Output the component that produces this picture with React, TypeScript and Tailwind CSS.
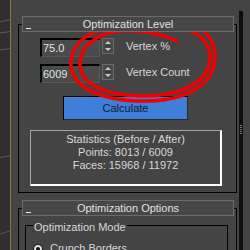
import React from 'react';

const Spinner: React.FC = () => (
  <div className="ml-[2px] flex h-[16px] w-[12px] items-center justify-center border border-[#6c6c6c] bg-[#4a4a4a]">
    <svg width="10" height="14" viewBox="0 0 10 14">
      <path d="M2 5 L5 2 L8 5 Z" fill="#c8c8c8" />
      <path d="M2 7 H8" stroke="#2e2e2e" strokeWidth="1" />
      <path d="M2 9 L5 12 L8 9 Z" fill="#c8c8c8" />
    </svg>
  </div>
);

const SpinnerRow: React.FC<{ value: string; label: string; className?: string }> = ({ value, label, className }) => (
  <div className={`flex items-center pl-[21px] ${className ?? ''}`}>
    <div className="h-[19px] w-[60px] border-t-2 border-l-2 border-r border-b border-t-black border-l-black border-r-[#585858] border-b-[#585858] bg-[#4b4b4b] pl-[1px] leading-[16px] text-[#dfe4ea]">
      {value}
    </div>
    <div className="self-start">
      <Spinner />
    </div>
    <span className="ml-[12px] -mt-[2px]">{label}</span>
  </div>
);

const RolloutHeader: React.FC<{ title: string; className?: string }> = ({ title, className }) => (
  <div className={`relative z-10 ml-[4px] mr-[3px] grid h-[16px] grid-cols-[1fr_auto_1fr] items-center border border-[#6b6b6b] bg-[#474747] text-[#e2e2e2] ${className ?? ''}`}>
    <div className="ml-[3px] mt-[8px] h-px w-[5px] bg-[#f0f0f0]" />
    <span className="leading-[13px]">{title}</span>
    <div />
  </div>
);

export default function App() {
  return (
    <div className="relative flex h-[250px] w-[250px] overflow-hidden bg-[#444444] font-['Liberation_Sans',Arial,sans-serif] text-[11px] leading-[13px] text-[#d8d8d8]">
      {/* viewport edge */}
      <div className="w-[10px] bg-[#2f2f2f]">
        <svg width="10" height="250" viewBox="0 0 10 250">
          <g stroke="#5a5a5a" strokeWidth="1">
            <path d="M0 22 L10 19.5" />
            <path d="M0 33 L10 31.5" />
            <path d="M0 50 L10 48.5" />
            <path d="M0 157.5 L10 156" />
            <path d="M0 234 L10 231" />
          </g>
        </svg>
      </div>
      <div className="w-px bg-[#8a7838]" />

      {/* command panel */}
      <div className="flex flex-1 flex-col">
        <div className="mx-[5px] mt-[3px] h-px bg-[#0c0c0c]" />
        <div className="mx-[5px] mt-[2px] h-px bg-[#242424]" />
        <div className="mt-[6px] flex flex-1">
          <div className="flex-1 pl-[7px] pr-[2px]">
            {/* Optimization Level */}
            <RolloutHeader title="Optimization Level" className="mt-[5px]" />
            <div className="-mt-[8px] border border-black pt-[13px] pb-[6px]">
              <SpinnerRow value="75.0" label="Vertex %" />
              <SpinnerRow value="6009" label="Vertex Count" className="mt-[7px]" />
              <div className="mt-[13px] ml-[44px] flex h-[24px] w-[125px] items-center justify-center border border-t-black border-l-black border-r-[#2a2a2a] border-b-[#2a2a2a] bg-[#3e7fda] text-[#141a2a]">
                Calculate
              </div>
              <div className="mt-[10px] ml-[11px] h-[56px] w-[192px] border-t border-l border-r-2 border-b-2 border-t-[#a4a4a4] border-l-[#a4a4a4] border-r-white border-b-white pt-[2px] text-center">
                <div>Statistics (Before / After)</div>
                <div>Points: 8013 / 6009</div>
                <div>Faces: 15968 / 11972</div>
              </div>
            </div>

            {/* Optimization Options */}
            <RolloutHeader title="Optimization Options" className="mt-[7px]" />
            <div className="-mt-[8px] h-[80px] border border-black">
              <div className="mt-[16px] ml-[6px] mr-[8px] h-[60px] border border-black">
                <div className="-mt-[5px] ml-[7px] w-fit bg-[#444444] px-[1px]">Optimization Mode</div>
                <div className="mt-[8px] ml-[7px] flex items-center">
                  <div className="flex h-[10px] w-[10px] items-center justify-center rounded-full border border-[#111] bg-[#e4e4e4]">
                    <div className="h-[4px] w-[4px] rounded-full bg-[#111]" />
                  </div>
                  <span className="ml-[7px]">Crunch Borders</span>
                </div>
              </div>
            </div>
          </div>
          {/* scrollbar */}
          <div className="flex w-[4px] flex-col items-center bg-[#0e0e0e] pt-[114px]">
            <div className="flex flex-col gap-[1px]">
              <div className="h-px w-[2px] bg-[#7a7a7a]" />
              <div className="h-px w-[2px] bg-[#7a7a7a]" />
              <div className="h-px w-[2px] bg-[#7a7a7a]" />
              <div className="h-px w-[2px] bg-[#7a7a7a]" />
              <div className="h-px w-[2px] bg-[#7a7a7a]" />
            </div>
          </div>
          <div className="w-[7px]" />
        </div>
      </div>

      {/* red hand-drawn circle */}
      <svg className="pointer-events-none absolute left-0 top-0" width="250" height="250" viewBox="0 0 250 250">
        <path
          d="M177 41 C160 33, 140 30, 120 31 C95 33, 80 48, 80 64 C80 84, 105 95, 140 96 C180 97, 210 82, 210 58 C210 35, 185 25, 160 24 C135 23, 110 25, 92 33 C75 42, 70 55, 71 66 C73 88, 100 100, 140 101 C185 102, 215 85, 215 57 C215 30, 190 18, 165 19 C150 20, 140 22, 128 26"
          fill="none"
          stroke="#f20000"
          strokeWidth="3.5"
          strokeLinecap="round"
          strokeLinejoin="round"
        />
      </svg>
    </div>
  );
}
